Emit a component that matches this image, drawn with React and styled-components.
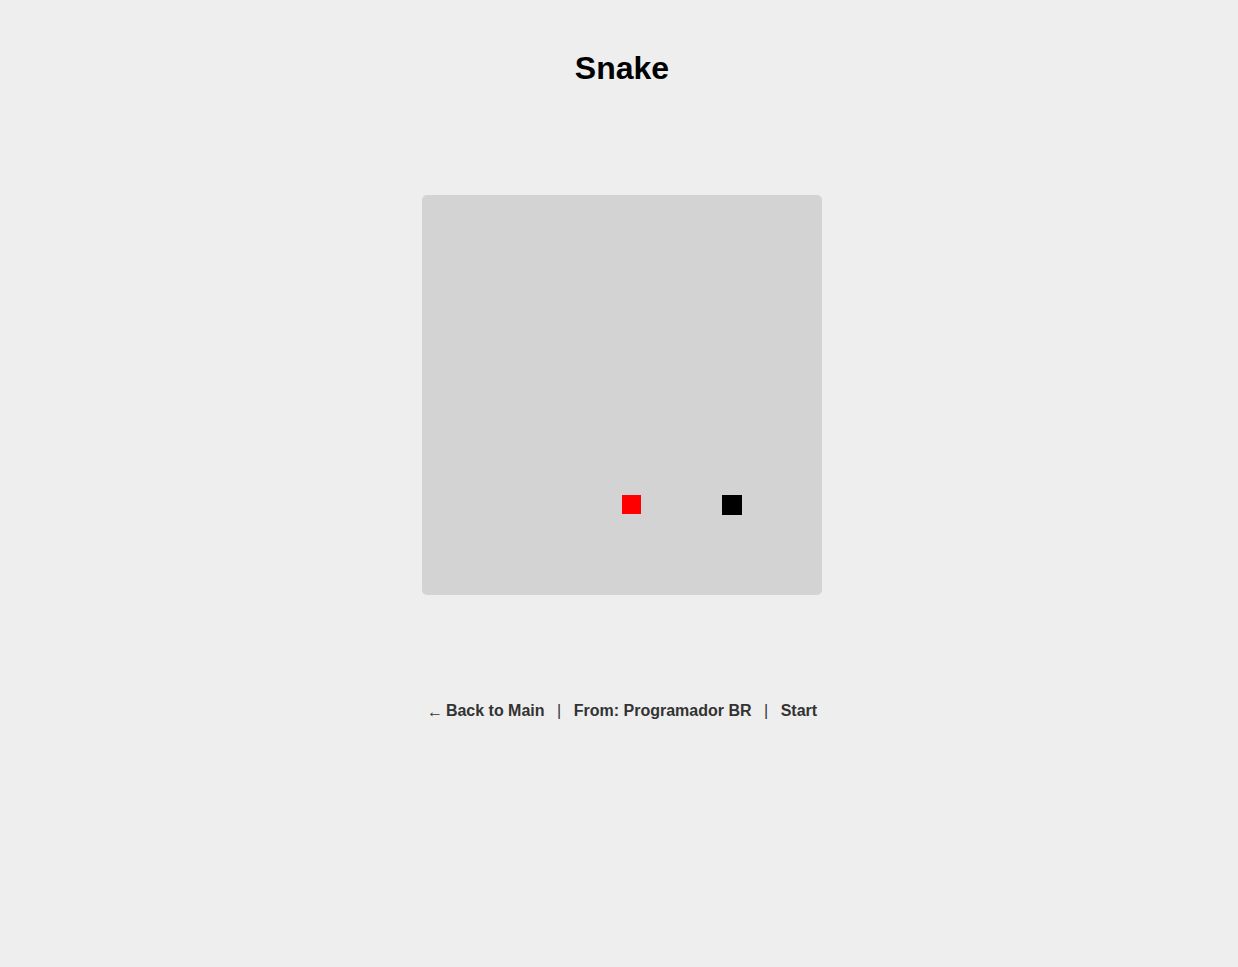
import React from 'react';
import styled, { createGlobalStyle } from 'styled-components';

const GlobalStyle = createGlobalStyle`
  html, body {
    margin: 0;
    padding: 0;
    background: #eeeeee;
  }
  body {
    font-family: "Liberation Sans", Arial, sans-serif;
    color: #333;
  }
`;

const CELL = 20;

const Page = styled.div`
  min-height: 967px;
  display: flex;
  flex-direction: column;
  align-items: center;
  padding-left: 6px;
  box-sizing: border-box;
`;

const Title = styled.h1`
  margin: 50px 0 0;
  font-size: 32px;
  line-height: 37px;
  font-weight: bold;
  color: #000;
`;

const Board = styled.div`
  position: relative;
  width: 400px;
  height: 400px;
  margin-top: 108px;
  background: #d3d3d3;
  border-radius: 5px;
`;

const Cell = styled.div`
  position: absolute;
  width: ${CELL}px;
  height: ${CELL}px;
  background: ${(p) => p.$color};
`;

const Footer = styled.nav`
  margin-top: 106px;
  display: flex;
  align-items: center;
  font-size: 16px;
  line-height: 20px;
  font-weight: bold;
  color: #333;
`;

const Link = styled.a`
  color: #333;
  text-decoration: none;
  cursor: pointer;
`;

const Arrow = styled.span`
  font-weight: normal;
  font-size: 16px;
  margin-right: 3px;
  position: relative;
  top: 1px;
`;

const Sep = styled.span`
  font-weight: normal;
  margin: 0 12.5px;
`;

const food = { x: 10, y: 15 };
const snake = [{ x: 15, y: 15 }];

export default function App() {
  return (
    <>
      <GlobalStyle />
      <Page>
        <Title>Snake</Title>
        <Board>
          <Cell $color="#ff0000" style={{ left: food.x * CELL, top: food.y * CELL, width: 19, height: 19 }} />
          {snake.map((s, i) => (
            <Cell key={i} $color="#000" style={{ left: s.x * CELL, top: s.y * CELL }} />
          ))}
        </Board>
        <Footer>
          <Link><Arrow>←</Arrow>Back to Main</Link>
          <Sep>|</Sep>
          <span>From: Programador BR</span>
          <Sep>|</Sep>
          <Link>Start</Link>
        </Footer>
      </Page>
    </>
  );
}
